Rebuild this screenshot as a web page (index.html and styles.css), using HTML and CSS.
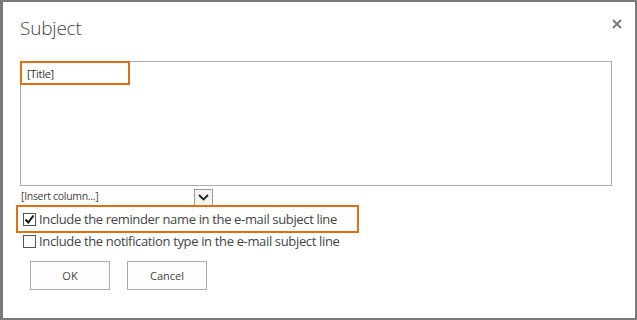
FILE: index.html
```html
<!DOCTYPE html>
<html lang="en">
<head>
    <meta charset="UTF-8">
    <title>Subject</title>
    <link rel="stylesheet" href="styles.css">
</head>
<body>
    <div class="dialog">
        <div class="dialog-header">
            <h1 class="dialog-title">Subject</h1>
            <button class="close-btn" aria-label="Close">
                <svg width="10" height="10" viewBox="0 0 10 10">
                    <path d="M1 1 L9 9 M9 1 L1 9" stroke="#777" stroke-width="1.8" fill="none"/>
                </svg>
            </button>
        </div>
        <div class="editor">
            <div class="editor-token">[Title]</div>
        </div>
        <div class="insert-row">
            <span class="insert-text">[Insert column...]</span>
            <span class="insert-arrow">
                <svg width="11" height="7" viewBox="0 0 11 7">
                    <path d="M1 1 L5.5 5.5 L10 1" stroke="#222" stroke-width="1.8" fill="none"/>
                </svg>
            </span>
        </div>
        <label class="check-row highlighted">
            <span class="check-box checked">
                <svg width="11" height="11" viewBox="0 0 11 11">
                    <path d="M1.5 5.5 L4.3 8.5 L9.5 1.5" stroke="#111" stroke-width="2" fill="none"/>
                </svg>
            </span>
            Include the reminder name in the e-mail subject line
        </label>
        <label class="check-row">
            <span class="check-box"></span>
            Include the notification type in the e-mail subject line
        </label>
        <div class="actions">
            <button class="btn">OK</button>
            <button class="btn">Cancel</button>
        </div>
    </div>
</body>
</html>
```

FILE: styles.css
```css
html, body {
    margin: 0;
    padding: 0;
}

body {
    font-family: "Open Sans", "Liberation Sans", Arial, sans-serif;
    color: #444;
    background-color: #fff;
}

.dialog {
    box-sizing: border-box;
    width: 637px;
    height: 320px;
    border: 2px solid #7a7a7a;
    border-left-width: 3px;
    padding: 0 23px 0 17px;
    background-color: #fff;
}

.dialog-header {
    display: flex;
    justify-content: space-between;
    align-items: flex-start;
    height: 59px;
}

.dialog-title {
    margin: 13px 0 0 0;
    font-size: 19px;
    font-weight: 300;
    color: #444;
    letter-spacing: -0.2px;
}

.close-btn {
    margin-top: 15px;
    margin-right: -10px;
    padding: 0;
    border: none;
    background: none;
    width: 10px;
    height: 10px;
    cursor: pointer;
}

.editor {
    height: 125px;
    width: 592px;
    box-sizing: border-box;
    border: 1px solid #ababab;
}

.editor-token {
    width: 110px;
    height: 24px;
    box-sizing: border-box;
    border: 2px solid #e3700f;
    margin: -1px 0 0 -1px;
    padding: 3px 0 0 5px;
    font-size: 11px;
    color: #333;
    letter-spacing: -0.3px;
}

.insert-row {
    display: flex;
    align-items: flex-end;
    justify-content: space-between;
    width: 193px;
    height: 19px;
    font-size: 10.5px;
    color: #444;
    letter-spacing: -0.3px;
}

.insert-text {
    padding: 0 0 2px 1px;
}

.insert-arrow {
    display: flex;
    align-items: center;
    justify-content: center;
    box-sizing: border-box;
    width: 19px;
    height: 16px;
    border: 1px solid #9a9a9a;
    border-bottom: none;
    background-color: #f4f4f4;
}

.check-row {
    display: flex;
    align-items: center;
    gap: 3px;
    font-size: 13px;
    color: #444;
    letter-spacing: -0.35px;
    height: 16px;
    padding-left: 3px;
}

.check-row.highlighted {
    box-sizing: border-box;
    width: 343px;
    height: 28px;
    margin-left: -4px;
    padding-left: 5px;
    border: 2px solid #e3700f;
}

.check-box {
    display: flex;
    align-items: center;
    justify-content: center;
    box-sizing: border-box;
    width: 13px;
    height: 13px;
    border: 1px solid #555;
    background-color: #fff;
    flex-shrink: 0;
}

.actions {
    display: flex;
    gap: 17px;
    padding: 12px 0 0 10px;
}

.btn {
    width: 80px;
    height: 29px;
    border: 1px solid #ababab;
    background-color: #fdfdfd;
    font-family: "Open Sans", "Liberation Sans", Arial, sans-serif;
    font-size: 11px;
    color: #444;
    padding: 0;
    cursor: pointer;
}
```
